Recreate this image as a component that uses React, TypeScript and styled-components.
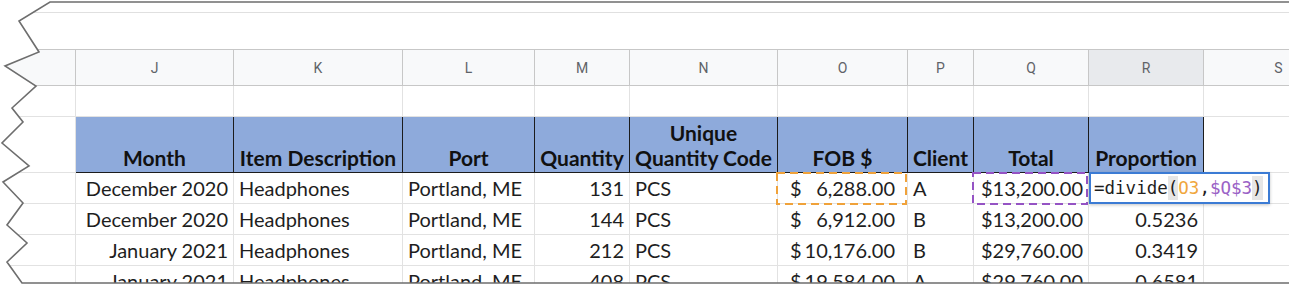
import React from "react";
import styled, { createGlobalStyle } from "styled-components";

const EDGE: [number, number][] = [
  [50, 2], [19, 21], [39, 52], [5, 66], [36, 86], [12, 108], [23, 122],
  [2, 143], [29, 166], [3, 182], [23, 203], [7, 225], [27, 243], [7, 262], [22, 283],
];

const CLIP = [[1289, 2], ...EDGE, [1289, 283]]
  .map(([x, y]) => `${x}px ${y}px`)
  .join(", ");

const OUTLINE = [[1289, 2], ...EDGE, [1289, 283]].map((p) => p.join(",")).join(" ");

const GlobalStyle = createGlobalStyle`
  html, body { margin: 0; padding: 0; background: #fff; }
  body { font-family: Lato, "Open Sans", sans-serif; }
`;

const Frame = styled.div`
  position: relative;
  width: 1289px;
  height: 285px;
  overflow: hidden;
  background: #fff;
`;

const Sheet = styled.div`
  width: 100%;
  height: 100%;
  display: flex;
  flex-direction: column;
  clip-path: polygon(${CLIP});
`;

const TopBar = styled.div`
  height: 13px;
  flex: none;
  box-sizing: border-box;
  border-bottom: 1px solid #e0e0e0;
`;

const Blank = styled.div`
  height: 36px;
  flex: none;
`;

const Grid = styled.div`
  display: grid;
  grid-template-columns: 76px 158px 169px 132px 95px 148px 130px 66px 115px 115px 150px;
  grid-template-rows: 37px 31px 56px repeat(4, 31px);
`;

const ColHead = styled.div<{ $active?: boolean }>`
  box-sizing: border-box;
  display: flex;
  align-items: center;
  justify-content: center;
  background: ${(p) => (p.$active ? "#e8eaed" : "#f8f9fa")};
  border-top: 1px solid #c7c7c7;
  border-bottom: 1px solid #c7c7c7;
  border-right: 1px solid #c7c7c7;
  font-family: Roboto, "Noto Sans", sans-serif;
  font-size: 14px;
  color: #5f6368;
`;

const Cell = styled.div<{ $align?: "left" | "right" | "center" }>`
  position: relative;
  box-sizing: border-box;
  display: flex;
  align-items: flex-end;
  justify-content: ${(p) =>
    p.$align === "right" ? "flex-end" : p.$align === "center" ? "center" : "flex-start"};
  padding: 0 5px 4px;
  border-right: 1px solid #e2e2e2;
  border-bottom: 1px solid #e2e2e2;
  font-size: 20px;
  line-height: 22px;
  color: #1e1e1e;
  white-space: nowrap;
`;

const Money = styled(Cell)`
  justify-content: space-between;
  padding-left: 12px;
  padding-right: 12px;
`;

const HeadCell = styled.div`
  box-sizing: border-box;
  display: flex;
  align-items: flex-end;
  justify-content: center;
  padding: 0 2px 2px;
  background: #8eaadb;
  border-right: 1px solid #1c1c1c;
  border-bottom: 1px solid #1c1c1c;
  box-shadow: -1px -1px 0 #1c1c1c;
  font-size: 21px;
  font-weight: 700;
  line-height: 25px;
  color: #111;
  text-align: center;
`;

const DashFrame = styled.svg`
  position: absolute;
  left: -2px;
  top: -1px;
  z-index: 2;
  pointer-events: none;
`;

const Editor = styled.div`
  position: absolute;
  left: 0;
  top: -1px;
  width: 181px;
  height: 32px;
  box-sizing: border-box;
  z-index: 3;
  display: flex;
  align-items: center;
  padding-left: 3px;
  background: #fff;
  border: 2px solid #3b7bd4;
  box-shadow: 0 1px 3px rgba(60, 64, 67, 0.3);
  font-family: "DejaVu Sans Mono", "Liberation Mono", monospace;
  font-size: 17.5px;
  color: #1e1e1e;
`;

const Tok = styled.span<{ $color?: string; $match?: boolean }>`
  color: ${(p) => p.$color || "inherit"};
  background: ${(p) => (p.$match ? "#e6e6e6" : "transparent")};
  line-height: 24px;
`;

const Outline = styled.svg`
  position: absolute;
  inset: 0;
  pointer-events: none;
`;

function Dash({ w, h, color }: { w: number; h: number; color: string }) {
  return (
    <DashFrame width={w} height={h}>
      <rect
        x={1}
        y={1}
        width={w - 2}
        height={h - 2}
        fill="none"
        stroke={color}
        strokeWidth={2}
        strokeDasharray="8 5"
      />
    </DashFrame>
  );
}

const letters = ["J", "K", "L", "M", "N", "O", "P", "Q", "R", "S"];
const heads = [
  "Month",
  "Item Description",
  "Port",
  "Quantity",
  "Unique Quantity Code",
  "FOB $",
  "Client",
  "Total",
  "Proportion",
];

const rows = [
  { month: "December 2020", qty: 131, fob: "6,288.00", client: "A", total: "$13,200.00", prop: "" },
  { month: "December 2020", qty: 144, fob: "6,912.00", client: "B", total: "$13,200.00", prop: "0.5236" },
  { month: "January 2021", qty: 212, fob: "10,176.00", client: "B", total: "$29,760.00", prop: "0.3419" },
  { month: "January 2021", qty: 408, fob: "19,584.00", client: "A", total: "$29,760.00", prop: "0.6581" },
];

export default function App() {
  return (
    <Frame>
      <GlobalStyle />
      <Sheet>
        <TopBar />
        <Blank />
        <Grid>
          <ColHead />
          {letters.map((l) => (
            <ColHead key={l} $active={l === "R"}>
              {l}
            </ColHead>
          ))}

          {Array.from({ length: 11 }).map((_, i) => (
            <Cell key={"b" + i} />
          ))}

          <Cell />
          {heads.map((h) => (
            <HeadCell key={h}>
              {h === "Unique Quantity Code" ? (
                <span>
                  Unique
                  <br />
                  Quantity Code
                </span>
              ) : (
                h
              )}
            </HeadCell>
          ))}
          <Cell />

          {rows.map((r, i) => (
            <React.Fragment key={i}>
              <Cell />
              <Cell $align="right">{r.month}</Cell>
              <Cell>Headphones</Cell>
              <Cell>Portland, ME</Cell>
              <Cell $align="right">{r.qty}</Cell>
              <Cell>PCS</Cell>
              <Money>
                <span>$</span>
                <span>{r.fob}</span>
                {i === 0 && <Dash w={131} h={33} color="#f0a23a" />}
              </Money>
              <Cell>{r.client}</Cell>
              <Cell $align="right">
                {r.total}
                {i === 0 && <Dash w={116} h={33} color="#9553c4" />}
              </Cell>
              <Cell $align="right">
                {i === 0 ? (
                  <Editor>
                    <Tok>=divide</Tok>
                    <Tok $match>(</Tok>
                    <Tok $color="#f0a63c">O3</Tok>
                    <Tok>,</Tok>
                    <Tok $color="#9a62c6">$Q$3</Tok>
                    <Tok $match>)</Tok>
                  </Editor>
                ) : (
                  r.prop
                )}
              </Cell>
              <Cell />
            </React.Fragment>
          ))}
        </Grid>
      </Sheet>
      <Outline width={1289} height={285}>
        <polyline points={OUTLINE} fill="none" stroke="#6e6e6e" strokeWidth={1.6} />
      </Outline>
    </Frame>
  );
}
